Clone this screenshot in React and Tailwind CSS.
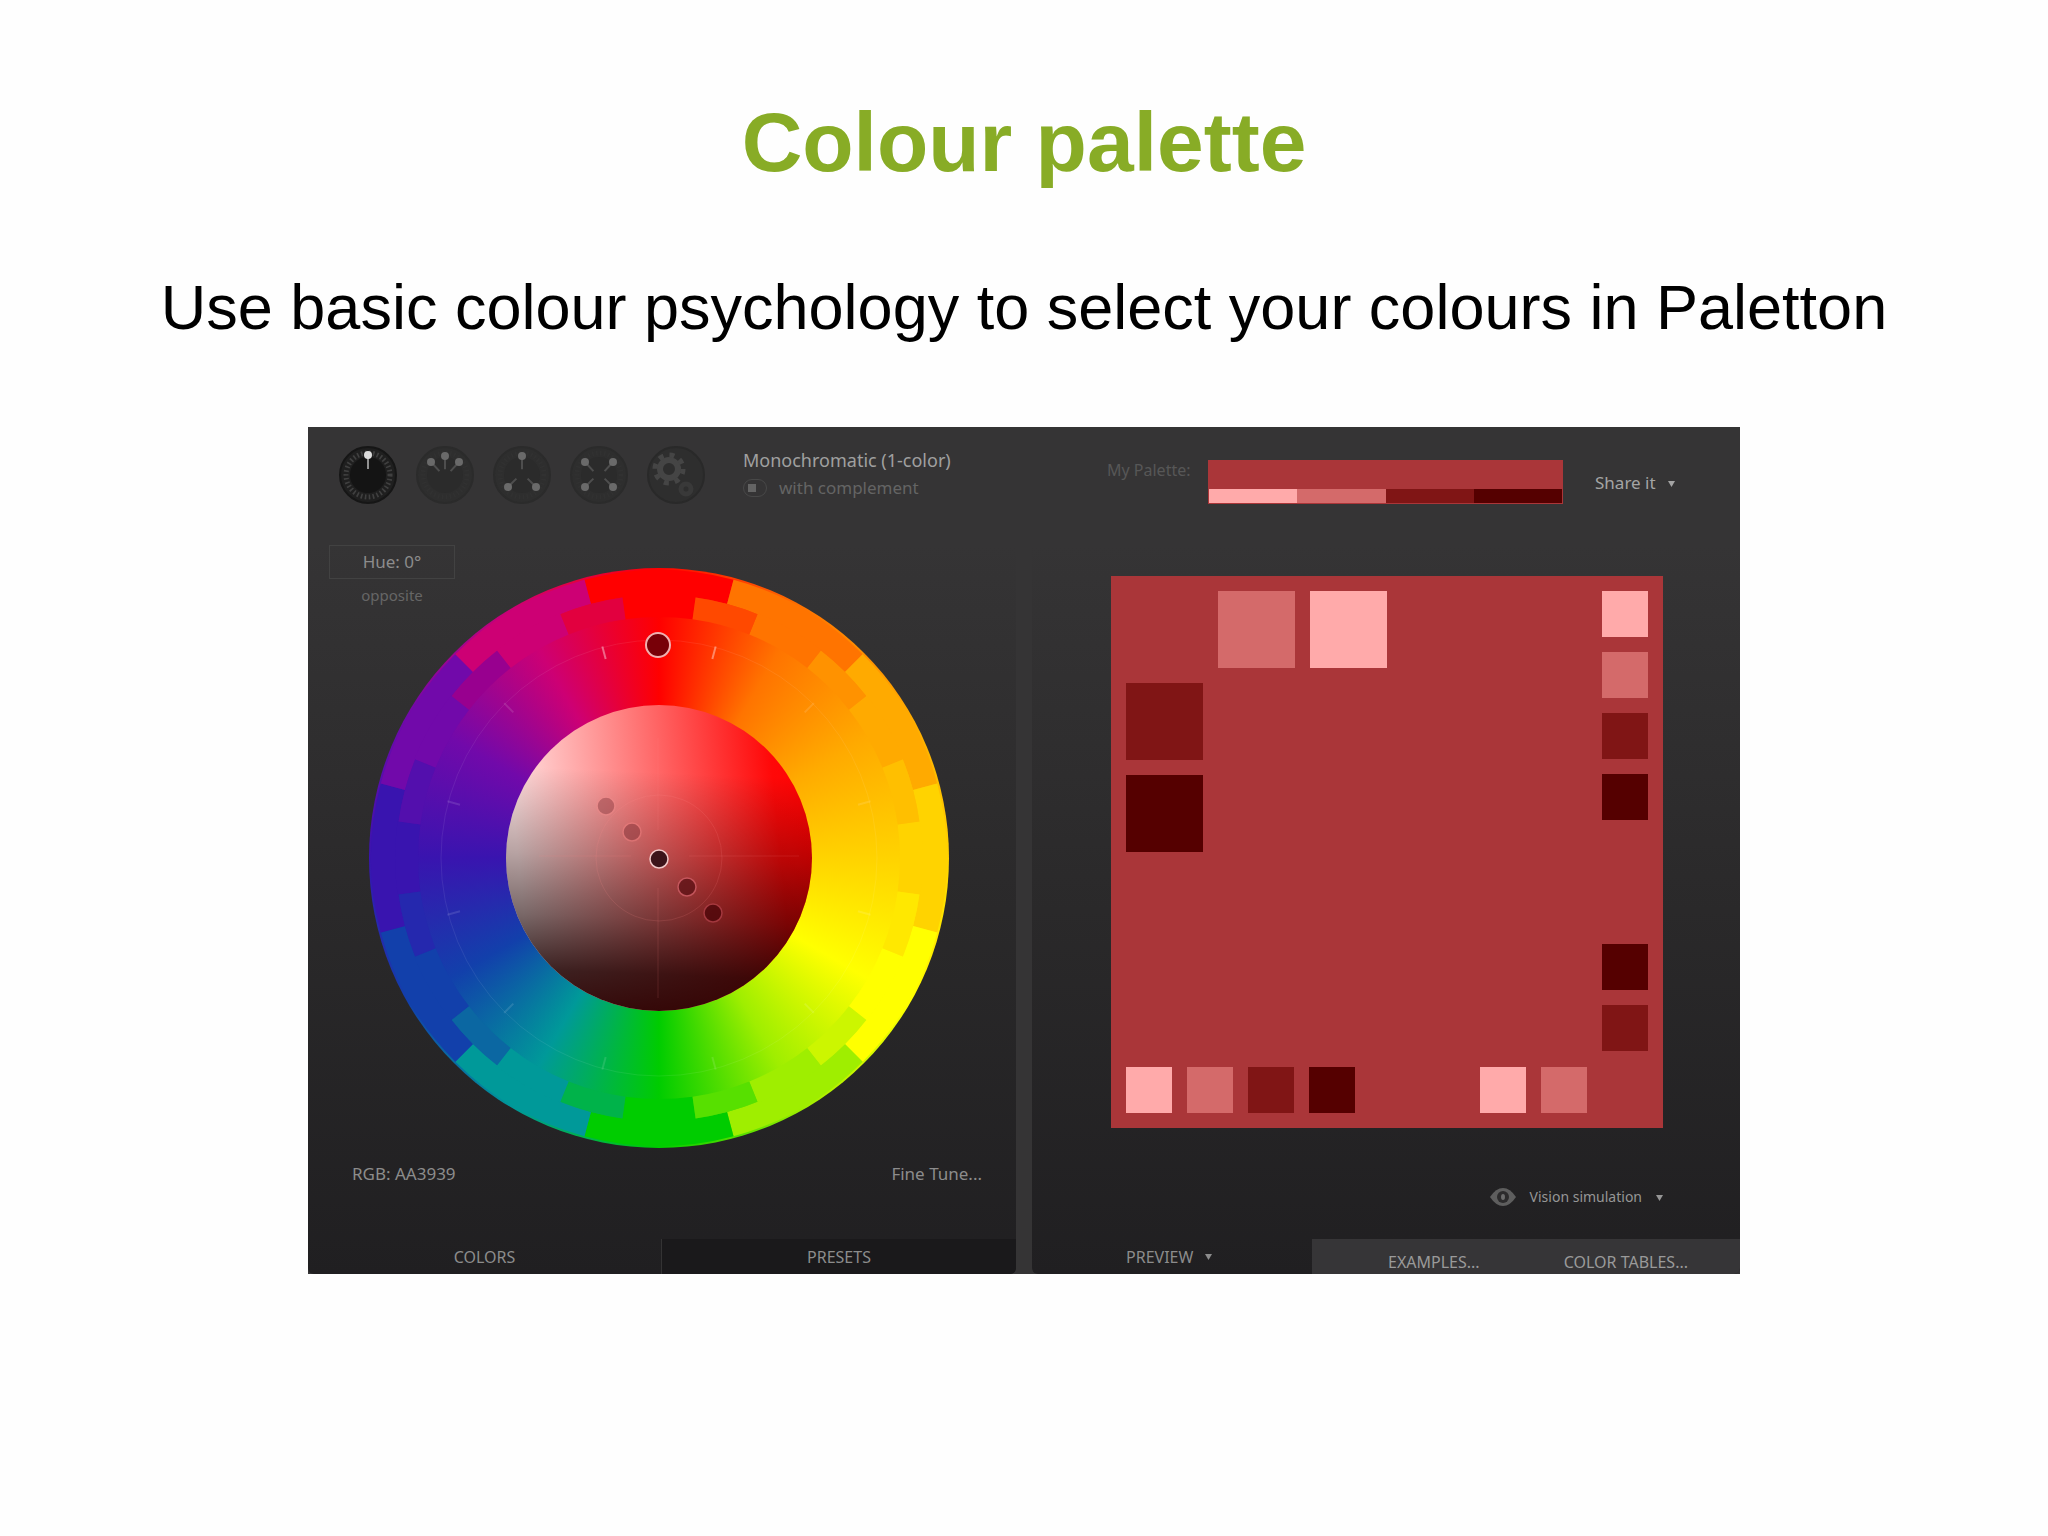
import React, { useState } from "react";

const HUES = ["#ff0000", "#ff7400", "#ffaa00", "#ffd300", "#ffff00", "#9fee00", "#00cc00", "#009999", "#1240ab", "#3914af", "#7109aa", "#cd0074"];
const MID_HUES = ["#ff4900", "#ff9200", "#ffbf00", "#ffe800", "#ccf600", "#57e000", "#00b34a", "#0b67a2", "#2528ae", "#530fad", "#98008f", "#e2003f"];

const point = (r, deg) => {
  const a = (deg * Math.PI) / 180;
  return `${(290 + r * Math.sin(a)).toFixed(2)} ${(290 - r * Math.cos(a)).toFixed(2)}`;
};

const tile = (r1, r2, from, to) =>
  `M${point(r2, from)}A${r2} ${r2} 0 0 1 ${point(r2, to)}L${point(r1, to)}A${r1} ${r1} 0 0 0 ${point(r1, from)}Z`;

function Wheel() {
  const dots = [
    { d: -53, fill: "#8a3a40", ring: "#f08a8a", o: 0.45 },
    { d: -27, fill: "#85343a", ring: "#f08080", o: 0.5 },
    { d: 0, fill: "#3c141a", ring: "#f0c8c8", o: 1 },
    { d: 28, fill: "#5a1014", ring: "#d06068", o: 0.75 },
    { d: 54, fill: "#4a0408", ring: "#b04048", o: 0.75 },
  ];
  return (
    <div className="relative size-[580px] rounded-full bg-[conic-gradient(#ff0000,#ff7400,#ffaa00,#ffd300,#ffff00,#9fee00,#00cc00,#009999,#1240ab,#3914af,#7109aa,#cd0074,#ff0000)]">
      <svg viewBox="0 0 580 580" className="absolute inset-0 size-full">
        <defs>
          <linearGradient id="tint" x1="0" y1="0.1" x2="1" y2="0">
            <stop offset="0" stopColor="#ffe2e2" />
            <stop offset="0.5" stopColor="#ff6262" />
            <stop offset="0.85" stopColor="#ff0808" />
            <stop offset="1" stopColor="#ff0000" />
          </linearGradient>
          <linearGradient id="shade" x1="0.52" y1="0" x2="0.48" y2="1">
            <stop offset="0.22" stopColor="#000" stopOpacity="0" />
            <stop offset="0.5" stopColor="#000" stopOpacity="0.28" />
            <stop offset="0.7" stopColor="#080000" stopOpacity="0.54" />
            <stop offset="0.88" stopColor="#180000" stopOpacity="0.84" />
            <stop offset="1" stopColor="#280000" stopOpacity="0.94" />
          </linearGradient>
        </defs>
        {HUES.map((c, i) => (
          <path key={c} d={tile(263, 288, i * 30 - 15, i * 30 + 15)} fill={c} />
        ))}
        {HUES.map((c, i) => (
          <path key={c} d={tile(241, 264, i * 30 - 8, i * 30 + 8)} fill={c} />
        ))}
        {MID_HUES.map((c, i) => (
          <path key={c} d={tile(241, 263, i * 30 + 8, i * 30 + 22)} fill={c} />
        ))}
        <circle cx="290" cy="290" r="218" fill="none" stroke="#fff" strokeOpacity="0.08" />
        {HUES.map((c, i) => (
          <path key={c} d={`M${point(206, i * 30 + 15)}L${point(219, i * 30 + 15)}`} stroke="#fff" strokeOpacity={i === 0 || i === 11 ? 0.4 : 0.12} strokeWidth="2" />
        ))}
        <circle cx="290" cy="290" r="153" fill="url(#tint)" />
        <circle cx="290" cy="290" r="153" fill="url(#shade)" />
        <g fill="none" stroke="#ff9090" strokeOpacity="0.15">
          <circle cx="290" cy="290" r="63" />
          <path d="M170 288H262M320 288H430M289 170V262M289 320V430" />
        </g>
        {dots.map((p) => (
          <g key={p.d} opacity={p.o}>
            <circle cx={290 + p.d} cy={291 + p.d} r="9" fill={p.fill} stroke={p.ring} strokeWidth="1.5" />
          </g>
        ))}
        <circle cx="289" cy="77" r="12" fill="#780008" stroke="#f0b0b0" strokeWidth="2" />
      </svg>
    </div>
  );
}

// spoke ends, measured from the middle of the dial
const SCHEMES = [
  { name: "Monochromatic", spokes: [[0, -20]], active: true },
  { name: "Adjacent", spokes: [[-14, -13], [0, -19], [14, -13]] },
  { name: "Triad", spokes: [[0, -19], [-14, 12], [14, 12]] },
  { name: "Tetrad", spokes: [[-14, -13], [14, -13], [-14, 12], [14, 12]] },
];

function SchemeIcon({ spokes, active }) {
  return (
    <svg viewBox="-29 -29 58 58" className="size-full">
      <circle r="28" fill={active ? "#1f1f1f" : "#2e2e2e"} stroke={active ? "#161616" : "#2b2b2b"} strokeWidth="2" />
      <circle r="22" fill="none" stroke={active ? "#404040" : "#313131"} strokeWidth="5" strokeDasharray="1.6 2.4" />
      <circle r="18" fill={active ? "#141414" : "#2b2b2b"} />
      {spokes.map(([x, y]) => (
        <g key={`${x},${y}`}>
          <path
            d={`M${x} ${y}L${x * 0.4} ${y * 0.3}`}
            stroke={active ? "#909090" : "#4e4e4e"}
            strokeWidth="2"
          />
          <circle cx={x} cy={y} r="4" fill={active ? "#dcdcdc" : "#6a6a6a"} />
        </g>
      ))}
    </svg>
  );
}

function FreeStyleIcon() {
  return (
    <svg viewBox="-29 -29 58 58" className="size-full">
      <circle r="28" fill="#2e2e2e" stroke="#292929" strokeWidth="2" />
      <g transform="translate(-7 -6)">
        <circle r="9" fill="none" stroke="#454545" strokeWidth="6" />
        <circle r="14" fill="none" stroke="#454545" strokeWidth="5" strokeDasharray="5 6" />
      </g>
      <circle cx="10" cy="14" r="5" fill="none" stroke="#393939" strokeWidth="5" />
    </svg>
  );
}

function Arrow() {
  return (
    <svg viewBox="0 0 8 8" className="size-[7px] fill-current">
      <path d="M0 1H8L4 8Z" />
    </svg>
  );
}

function Swatch({ color, big }) {
  return <button type="button" aria-label={color} className={big ? "size-[77px]" : "size-[46px]"} style={{ background: color }} />;
}

const LIGHT = "#ffaaaa";
const SOFT = "#d46a6a";
const DARK = "#801515";
const DEEP = "#550000";

function Preview() {
  return (
    <div className="grid size-[552px] grid-cols-[1fr_auto] grid-rows-[1fr_auto] gap-y-4 bg-[#aa3639] p-[15px]">
      <div className="grid grid-cols-[77px_77px_77px] content-start gap-[15px]">
        <span />
        <Swatch big color={SOFT} />
        <Swatch big color={LIGHT} />
        <div className="col-span-3 flex flex-col gap-[15px]">
          <Swatch big color={DARK} />
          <Swatch big color={DEEP} />
        </div>
      </div>
      <div className="flex flex-col justify-between">
        <div className="flex flex-col gap-[15px]">
          {[LIGHT, SOFT, DARK, DEEP].map((c) => <Swatch key={c} color={c} />)}
        </div>
        <div className="flex flex-col gap-[15px]">
          {[DEEP, DARK].map((c) => <Swatch key={c} color={c} />)}
        </div>
      </div>
      <div className="col-span-2 flex justify-between pr-[61px]">
        <div className="flex gap-[15px]">
          {[LIGHT, SOFT, DARK, DEEP].map((c) => <Swatch key={c} color={c} />)}
        </div>
        <div className="flex gap-[15px]">
          {[LIGHT, SOFT].map((c) => <Swatch key={c} color={c} />)}
        </div>
      </div>
    </div>
  );
}

function App() {
  const [complement, setComplement] = useState(false);

  return (
    <main className="min-h-screen bg-[#fefefe] pt-[88px] font-['Liberation_Sans',Arial,sans-serif]">
      <h1 className="text-center text-[84px] leading-[108px] font-bold text-[#88ac26]">Colour palette</h1>
      <p className="mt-[75px] text-center text-[63px] leading-[72px] text-black">
        Use basic colour psychology to select your colours in Paletton
      </p>

      <div className="mx-auto mt-[84px] grid w-full max-w-[1432px] grid-cols-2 bg-[#353435] font-['Noto_Sans','Open_Sans',sans-serif] text-[17px] leading-6 text-[#8c8c8c]">
        <section className="flex flex-col">
          <header className="flex h-[118px] items-start gap-[38px] pt-[19px] pl-[31px]">
            <div className="flex gap-[19px]">
              {SCHEMES.map((s) => (
                <button key={s.name} type="button" aria-label={s.name} className="size-[58px]">
                  <SchemeIcon spokes={s.spokes} active={s.active} />
                </button>
              ))}
              <button type="button" aria-label="Free style" className="size-[58px]">
                <FreeStyleIcon />
              </button>
            </div>
            <div>
              <p className="text-[18px] leading-7 text-[#a0a0a0]">Monochromatic (1-color)</p>
              <label className="flex items-center gap-3 leading-7 text-[#646464]">
                <input
                  type="checkbox"
                  checked={complement}
                  onChange={(e) => setComplement(e.target.checked)}
                  className="flex h-[18px] w-6 appearance-none items-center rounded-full border border-[#484848] pl-1 before:size-2 before:bg-[#646464] checked:justify-end checked:pr-1"
                />
                with complement
              </label>
            </div>
          </header>

          <div className="mr-2 flex flex-1 flex-col overflow-hidden rounded-b-md bg-linear-to-b from-[#353435] via-[#2a292a] to-[#201f21]">
            <div className="grid">
              <div className="z-10 col-start-1 row-start-1 ml-[21px] w-[126px] justify-self-start self-start text-center">
                <button type="button" className="block h-[34px] w-full border border-[#424242] text-[#8c8c8c]">Hue: 0°</button>
                <button type="button" className="text-[15px] leading-8 text-[#666666]">opposite</button>
              </div>
              <div className="col-start-1 row-start-1 mt-[23px] mr-[6px] justify-self-center">
                <Wheel />
              </div>
            </div>
            <div className="mt-[14px] flex flex-1 items-start justify-between pr-[34px] pb-[53px] pl-11">
              <button type="button">RGB: AA3939</button>
              <button type="button">Fine Tune...</button>
            </div>
            <div className="grid grid-cols-2">
              <button type="button" className="h-[35px] border-r border-[#343334] text-[16px]">COLORS</button>
              <button type="button" className="h-[35px] bg-[#1a191b] text-[16px]">PRESETS</button>
            </div>
          </div>
        </section>

        <section className="flex flex-col">
          <header className="flex h-[118px] items-start pl-[83px]">
            <span className="mt-[31px] w-[101px] text-[16px] text-[#575757]">My Palette:</span>
            <div className="mt-[33px] h-11 w-[355px] border border-[#aa3639] bg-[#aa3639] pt-7">
              <div className="grid h-[14px] grid-cols-4">
                <span className="bg-[#ffaaaa]" />
                <span className="bg-[#d46a6a]" />
                <span className="bg-[#801515]" />
                <span className="bg-[#550000]" />
              </div>
            </div>
            <button type="button" className="mt-11 ml-8 flex items-center gap-3 text-[#a4a4a4]">
              Share it <Arrow />
            </button>
          </header>

          <div className="ml-2 flex flex-1 flex-col overflow-hidden rounded-b-md bg-linear-to-b from-[#353435] via-[#2a292a] to-[#201f21]">
            <div className="mt-[31px] flex justify-center pl-[2px]">
              <Preview />
            </div>
            <div className="mt-[57px] flex flex-1 items-start justify-end pr-[77px]">
              <button type="button" className="flex items-center gap-[14px] text-[14px] text-[#969696]">
                <svg viewBox="0 0 26 18" className="h-[18px] w-[26px]">
                  <path d="M0 9Q6 0 13 0T26 9Q20 18 13 18T0 9Z" fill="#5e5e5e" />
                  <circle cx="13" cy="9" r="6" fill="#2c2b2c" />
                  <ellipse cx="13" cy="9" rx="2" ry="3" fill="#6c6c6c" />
                </svg>
                Vision simulation <Arrow />
              </button>
            </div>
            <div className="flex">
              <button type="button" className="flex h-[35px] w-[280px] items-center gap-3 pl-[94px] text-[16px]">
                PREVIEW <Arrow />
              </button>
              <div className="flex flex-1 items-center justify-between bg-[#363537] pt-[10px] pr-[52px] pl-[76px] text-[16px] text-[#9a9a9a]">
                <button type="button">EXAMPLES...</button>
                <button type="button">COLOR TABLES...</button>
              </div>
            </div>
          </div>
        </section>
      </div>
    </main>
  );
}

export default App;
